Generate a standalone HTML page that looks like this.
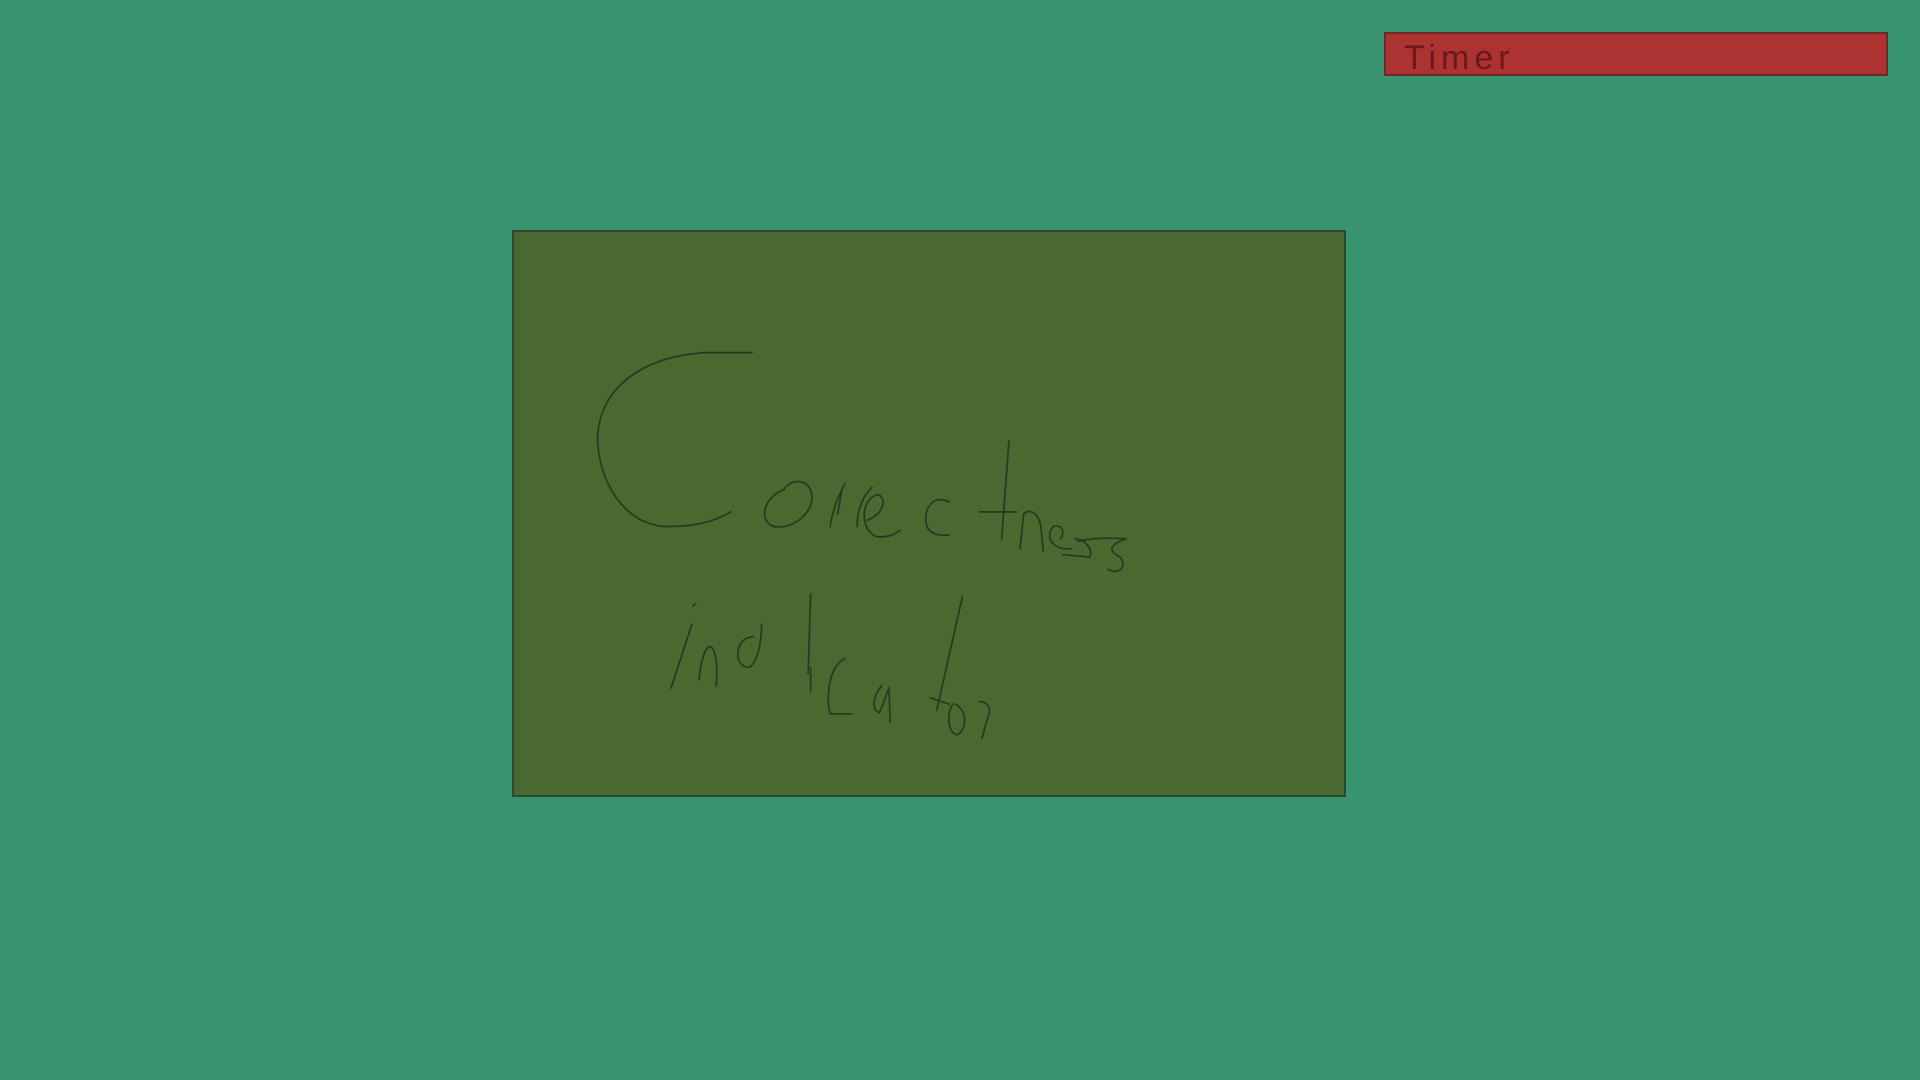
<!DOCTYPE html>
<html><head><meta charset="utf-8"><style>
html,body{margin:0;padding:0;width:1920px;height:1080px;overflow:hidden;background:#389570;}
#timer{position:absolute;left:1384px;top:32px;width:500px;height:40px;background:#ad3232;border:2px solid #6e2a2a;box-sizing:content-box;}
#timer span{position:absolute;left:18px;top:5px;font-family:"Liberation Sans",sans-serif;font-size:34px;letter-spacing:5px;color:#6a1a1a;}
#box{position:absolute;left:512px;top:230px;width:830px;height:563px;background:#4a6930;border:2px solid #2d4a30;}
svg{position:absolute;left:0;top:0;}
</style></head><body>
<div id="timer"><span>Timer</span></div>
<div id="box"></div>
<svg width="1920" height="1080" viewBox="0 0 1568 882" fill="none" stroke="#263a20" stroke-width="1.4" stroke-linecap="round">
<path d="M614,288 L575,288 C520,292 488,320 488,360 C490,400 515,430 545,430 C570,430 585,425 597,418"/>
<path d="M640,400 C625,405 618,425 632,430 C650,433 668,415 662,400 C657,390 645,392 640,400"/>
<path d="M678,430 C680,415 685,405 690,395 M688,398 L684,420 M700,430 C700,415 705,405 712,398"/>
<path d="M708,425 C720,420 725,410 718,404 C705,404 700,430 715,438 C725,440 733,435 735,433"/>
<path d="M775,410 C760,402 752,420 758,432 C763,438 770,437 775,437"/>
<path d="M824,360 L818,440 M800,418 L830,418"/>
<path d="M833,448 L836,420 C840,415 848,418 850,430 L852,450"/>
<path d="M866,440 C870,435 868,428 860,430 C852,440 862,450 875,448 M868,453 L890,455 C893,448 885,440 878,440 M880,442 C900,438 910,440 920,440 C905,445 905,450 915,455 C920,462 915,470 905,465"/>
<path d="M568,493 L566,495 M565,510 L548,562 M571,555 C572,540 576,528 580,528 C585,530 586,545 585,560"/>
<path d="M615,520 C600,520 598,545 612,545 C620,540 622,520 622,510 M662,485 L660,550 M662,545 L662,565"/>
<path d="M690,538 C675,545 675,575 678,583 L695,583"/>
<path d="M720,560 C712,570 712,580 718,582 C722,575 724,565 726,562 L727,590"/>
<path d="M786,487 L765,580 M760,570 L775,575"/>
<path d="M778,575 C772,585 775,600 782,600 C790,595 790,580 780,575 M800,573 C808,573 810,580 806,588 L802,603"/>
</svg>
</body></html>
